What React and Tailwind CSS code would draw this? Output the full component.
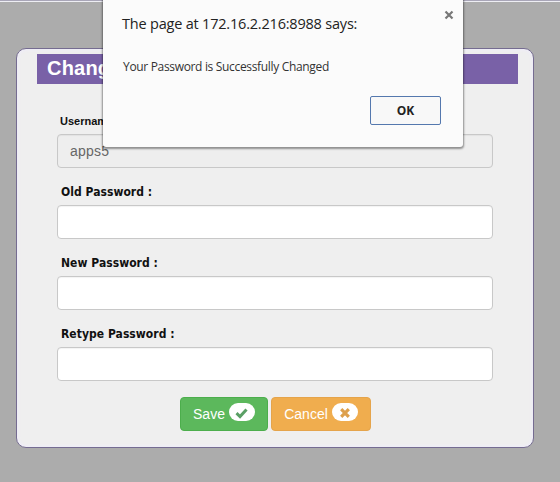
import React from "react";

function Field({ label, value, small, disabled }) {
  return (
    <div className="flex h-[71px] flex-col">
      <label
        className={
          small
            ? "h-[22px] pl-[3px] pt-px font-['Liberation_Sans',Arial,sans-serif] text-[11px] leading-[16px] font-bold text-[#111]"
            : "h-[22px] pt-px pl-1 font-['DejaVu_Sans_Condensed','DejaVu_Sans',sans-serif] text-[12px] leading-[17px] font-bold tracking-[0.04px] [font-stretch:condensed] text-[#111]"
        }
      >
        {label}
      </label>
      <div
        className={
          "flex h-[34px] items-center rounded border border-[#c8c8c8] px-3 font-['Liberation_Sans',Arial,sans-serif] text-[14px] tracking-[0.2px] text-[#666] shadow-[inset_0_1px_1px_rgba(0,0,0,0.05)] " +
          (disabled ? "bg-[#eeeeee]" : "bg-white")
        }
      >
        {value}
      </div>
    </div>
  );
}

function Pill({ children }) {
  return (
    <span className="mb-[4px] flex h-[18px] w-[26px] items-center justify-center rounded-full bg-white">
      {children}
    </span>
  );
}

function Dialog() {
  return (
    <div className="absolute top-[-4px] left-[103px] flex h-[151px] w-[360px] flex-col rounded-b-[3px] bg-[#fbfbfb] pt-[4px] font-['Open_Sans',sans-serif] shadow-[0_1px_2px_1px_rgba(0,0,0,0.4)]">
      <div className="flex items-start justify-between pr-[9px] pl-[19px]">
        <h2 className="pt-[14px] text-[14.5px] leading-[20px] tracking-[-0.2px] whitespace-nowrap text-[#222]">
          The page at 172.16.2.216:8988 says:
        </h2>
        <svg className="mt-[10px] h-[10px] w-[10px]" viewBox="0 0 10 10" aria-label="Close">
          <path d="M1.5 1.5L8.5 8.5M8.5 1.5L1.5 8.5" stroke="#777" strokeWidth="2.2" />
        </svg>
      </div>
      <p className="mt-[24px] pl-[20px] text-[12px] leading-[17px] tracking-[-0.33px] whitespace-nowrap text-[#333]">
        Your Password is Successfully Changed
      </p>
      <button className="mt-[21px] mr-[22px] h-[29px] w-[71px] self-end rounded-[2px] border border-[#5478ae] bg-[#f8f8f8] text-[12px] font-bold text-[#222]">
        OK
      </button>
    </div>
  );
}

export default function App() {
  return (
    <div className="relative h-[482px] w-[560px] overflow-hidden bg-[#acacac]">
      <div className="h-[2px] border-b border-[#eeeef4] bg-[#a9a6b8]" />
      <main className="mt-[46px] ml-[16px] h-[400px] w-[518px] rounded-[10px] border border-[#756c91] bg-[#efefef] pt-[5px] shadow-[inset_0_0_4px_#eeeaff]">
        <h1 className="ml-[20px] h-[30px] w-[481px] bg-[#7961a7] pl-[10px] font-['Liberation_Sans',Arial,sans-serif] text-[20px] leading-[29px] font-bold tracking-[0.2px] text-white">
          Change Password
        </h1>
        <form className="mt-[28px] ml-[40px] w-[436px]">
          <Field label="Username :" value="apps5" small disabled />
          <Field label="Old Password :" />
          <Field label="New Password :" />
          <Field label="Retype Password :" />
          <div className="ml-[123px] flex gap-[3px] pt-px font-['Liberation_Sans',Arial,sans-serif] text-[14px] text-white">
            <button
              type="button"
              className="flex h-[34px] w-[88px] items-center justify-center gap-1 rounded border border-[#4cae4c] bg-[#5cb85c]"
            >
              Save
              <Pill>
                <svg className="mt-px h-[12px] w-[13px]" viewBox="0 0 13 12">
                  <path d="M1.5 6.2L5 9.5L11.5 2.5" fill="none" stroke="#5a9f65" strokeWidth="3" />
                </svg>
              </Pill>
            </button>
            <button
              type="button"
              className="flex h-[34px] w-[100px] items-center justify-center gap-1 rounded border border-[#e5a44b] bg-[#f0ad4e]"
            >
              Cancel
              <Pill>
                <svg className="mt-[2px] h-[10px] w-[10px]" viewBox="0 0 10 10">
                  <path d="M1.2 1.2L8.8 8.8M8.8 1.2L1.2 8.8" stroke="#dda04c" strokeWidth="3.2" />
                </svg>
              </Pill>
            </button>
          </div>
        </form>
      </main>
      <Dialog />
    </div>
  );
}
